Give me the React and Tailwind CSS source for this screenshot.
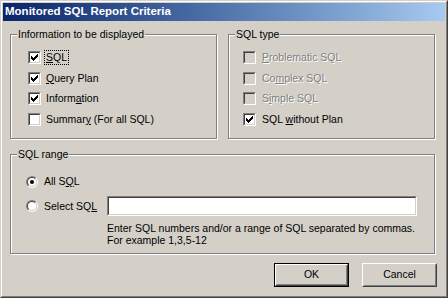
import React from "react";

const font = { fontFamily: '"Liberation Sans", Arial, sans-serif' };

// classic 3D check mark, drawn pixel by pixel
function Check() {
  const cols = [2, 3, 4, 3, 2, 1, 0];
  return (
    <svg width="7" height="7" viewBox="0 0 7 7" shapeRendering="crispEdges" className="block">
      {cols.map((y, x) => (
        <rect key={x} x={x} y={y} width="1" height="3" fill="#000" />
      ))}
    </svg>
  );
}

function CheckBox({ checked, disabled }) {
  return (
    <div className="w-[13px] h-[13px] shrink-0 border border-t-[#808080] border-l-[#808080] border-b-white border-r-white">
      <div
        className={
          "w-full h-full border border-t-[#404040] border-l-[#404040] border-b-[#d4d0c8] border-r-[#d4d0c8] flex items-center justify-center " +
          (disabled ? "bg-[#d4d0c8]" : "bg-white")
        }
      >
        {checked && <Check />}
      </div>
    </div>
  );
}

function Radio({ checked }) {
  return (
    <div className="w-[12px] h-[12px] shrink-0 rounded-full border border-t-[#808080] border-l-[#808080] border-b-white border-r-white">
      <div className="w-full h-full rounded-full bg-white border border-t-[#404040] border-l-[#404040] border-b-[#d4d0c8] border-r-[#d4d0c8] flex items-center justify-center">
        {checked && <div className="w-[4px] h-[4px] rounded-full bg-black" />}
      </div>
    </div>
  );
}

// label with one underlined access key
function Label({ text, u, disabled, focus }) {
  const parts = [text.slice(0, u), text.slice(u, u + 1), text.slice(u + 1)];
  return (
    <span
      className={
        "leading-[13px] whitespace-nowrap " +
        (disabled ? "text-[#808080] [text-shadow:1px_1px_0_#fff]" : "text-black") +
        (focus ? " outline outline-1 outline-dotted outline-black outline-offset-0 px-[1px] -mx-[1px]" : "")
      }
    >
      {parts[0]}
      <span className="underline underline-offset-[1px]">{parts[1]}</span>
      {parts[2]}
    </span>
  );
}

function Group({ title, className, children }) {
  return (
    <div className={"relative border border-[#808080] shadow-[inset_1px_1px_0_#fff,1px_1px_0_#fff] " + className}>
      <span className="absolute top-[-7px] left-[6px] bg-[#d4d0c8] px-[1px] leading-[13px] text-black">{title}</span>
      {children}
    </div>
  );
}

const left = [
  { t: "SQL", u: 0, c: true, f: true },
  { t: "Query Plan", u: 0, c: true },
  { t: "Information", u: 6, c: true },
  { t: "Summary (For all SQL)", u: 6, c: false },
];

const right = [
  { t: "Problematic SQL", u: 0, c: false, d: true },
  { t: "Complex SQL", u: 2, c: false, d: true },
  { t: "Simple SQL", u: 1, c: false, d: true },
  { t: "SQL without Plan", u: 4, c: true },
];

export default function App() {
  return (
    <div className="w-[448px] h-[298px] bg-[#d4d0c8] text-[10.5px] border border-t-[#d4d0c8] border-l-[#d4d0c8] border-b-[#404040] border-r-[#404040]" style={font}>
      <div className="w-full h-full border border-t-white border-l-white border-b-[#808080] border-r-[#808080] p-[1px]">
        {/* title bar */}
        <div className="h-[18px] flex items-center pl-[2px] bg-gradient-to-r from-[#0a246a] to-[#a6caf0]">
          <span className="text-white font-bold text-[11.5px] leading-none">Monitored SQL Report Criteria</span>
        </div>

        <div className="pl-[7px] pt-[13px]">
          <div className="flex gap-[11px]">
            <Group title="Information to be displayed" className="w-[207px] h-[105px]">
              <div className="pl-[17px] pt-[16px] flex flex-col gap-[7.5px]">
                {left.map((r) => (
                  <div key={r.t} className="flex items-center gap-[5px] h-[13px]">
                    <CheckBox checked={r.c} />
                    <Label text={r.t} u={r.u} focus={r.f} />
                  </div>
                ))}
              </div>
            </Group>
            <Group title="SQL type" className="w-[207px] h-[105px]">
              <div className="pl-[14px] pt-[16px] flex flex-col gap-[7.5px]">
                {right.map((r) => (
                  <div key={r.t} className="flex items-center gap-[6px] h-[13px]">
                    <CheckBox checked={r.c} disabled={r.d} />
                    <Label text={r.t} u={r.u} disabled={r.d} />
                  </div>
                ))}
              </div>
            </Group>
          </div>

          <Group title="SQL range" className="w-[425px] h-[100px] mt-[15px]">
            <div className="pl-[15px] pt-[20px] flex flex-col">
              <div className="flex items-center gap-[6px] h-[13px]">
                <Radio checked />
                <Label text="All SQL" u={5} />
              </div>
              <div className="flex items-center mt-[8px] h-[20px]">
                <div className="w-[81px] flex items-center gap-[6px]">
                  <Radio />
                  <Label text="Select SQL" u={9} />
                </div>
                <div className="w-[310px] h-[20px] border border-t-[#808080] border-l-[#808080] border-b-white border-r-white">
                  <div className="w-full h-full bg-white border border-t-[#404040] border-l-[#404040] border-b-[#d4d0c8] border-r-[#d4d0c8]" />
                </div>
              </div>
              <div className="ml-[81px] mt-[6px] leading-[12px] text-black">
                <div>Enter SQL numbers and/or a range of SQL separated by commas.</div>
                <div>For example 1,3,5-12</div>
              </div>
            </div>
          </Group>

          <div className="w-[427px] flex justify-end gap-[13px] mt-[9px]">
            <div className="w-[75px] h-[24px] border border-black">
              <div className="w-full h-full border border-t-white border-l-white border-b-[#404040] border-r-[#404040]">
                <div className="w-full h-full border border-t-[#d4d0c8] border-l-[#d4d0c8] border-b-[#808080] border-r-[#808080] flex items-center justify-center text-black">
                  OK
                </div>
              </div>
            </div>
            <div className="w-[75px] h-[24px] border border-t-white border-l-white border-b-[#404040] border-r-[#404040]">
              <div className="w-full h-full border border-t-[#d4d0c8] border-l-[#d4d0c8] border-b-[#808080] border-r-[#808080] flex items-center justify-center text-black">
                Cancel
              </div>
            </div>
          </div>
        </div>
      </div>
    </div>
  );
}
